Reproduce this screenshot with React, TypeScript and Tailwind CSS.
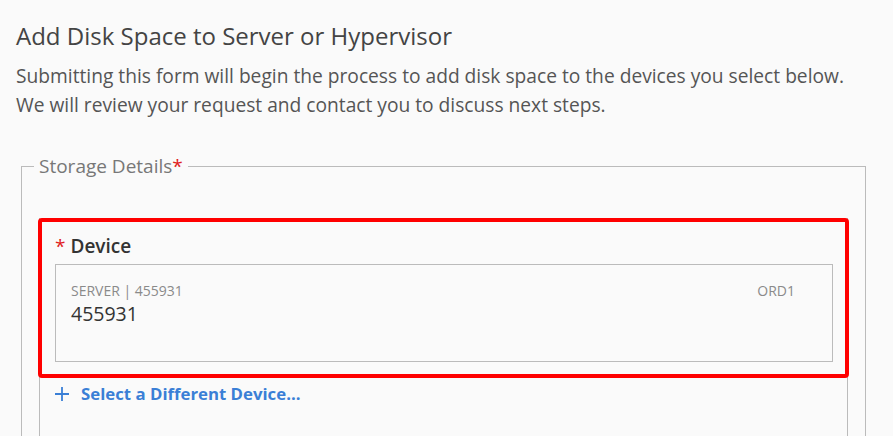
import React from "react";

export default function App() {
  return (
    <div
      className="w-full h-[436px] overflow-hidden bg-[#fafafa] pl-[16px] pt-[20px] text-[#444]"
      style={{ fontFamily: '"Open Sans", "Noto Sans", sans-serif' }}
    >
      <h1 className="text-[24px] leading-[32px] font-normal text-[#444]">
        Add Disk Space to Server or Hypervisor
      </h1>
      <p className="mt-[9px] text-[19.2px] leading-[29px] text-[#555]">
        Submitting this form will begin the process to add disk space to the devices you select below.
        <br />
        We will review your request and contact you to discuss next steps.
      </p>
      <fieldset className="mt-[34px] ml-[5px] w-[845px] h-[400px] border border-[#bbb] p-0">
        <legend className="ml-[12px] px-[5px] text-[19px] leading-[26px] text-[#777]">
          Storage Details<span className="text-[#e02020]">*</span>
        </legend>
        <div className="ml-[17px] mt-[39px] w-[809px] h-[400px] border-x border-[#bbb]">
          <div className="-ml-[2px] w-[811px] border-4 border-[#ff0000] rounded-[4px] pt-[11px] pb-[12px]">
            <div className="pl-[13px] flex items-center text-[19px] leading-[26px] font-semibold text-[#333]">
              <span className="text-[#e02020] font-normal mr-[5px]">*</span>
              Device
            </div>
            <div className="mt-[5px] ml-[13px] mr-[12px] h-[98px] border border-[#bbb] pl-[15px] pr-[37px] pt-[16px]">
              <div className="flex justify-between text-[14px] leading-[20px] text-[#8a8a8a]">
                <span>SERVER | 455931</span>
                <span>ORD1</span>
              </div>
              <div className="mt-[1px] text-[19.5px] leading-[24px] text-[#333]">455931</div>
            </div>
          </div>
          <div className="mt-[4px] ml-[14px] flex items-center text-[16.8px] leading-[24px] font-bold text-[#3a7fd6]">
            <svg width="16" height="16" viewBox="0 0 16 16" className="mr-[11px]">
              <path d="M8 1v14M1 8h14" stroke="#3a7fd6" strokeWidth="1.8" fill="none" />
            </svg>
            Select a Different Device...
          </div>
        </div>
      </fieldset>
    </div>
  );
}
